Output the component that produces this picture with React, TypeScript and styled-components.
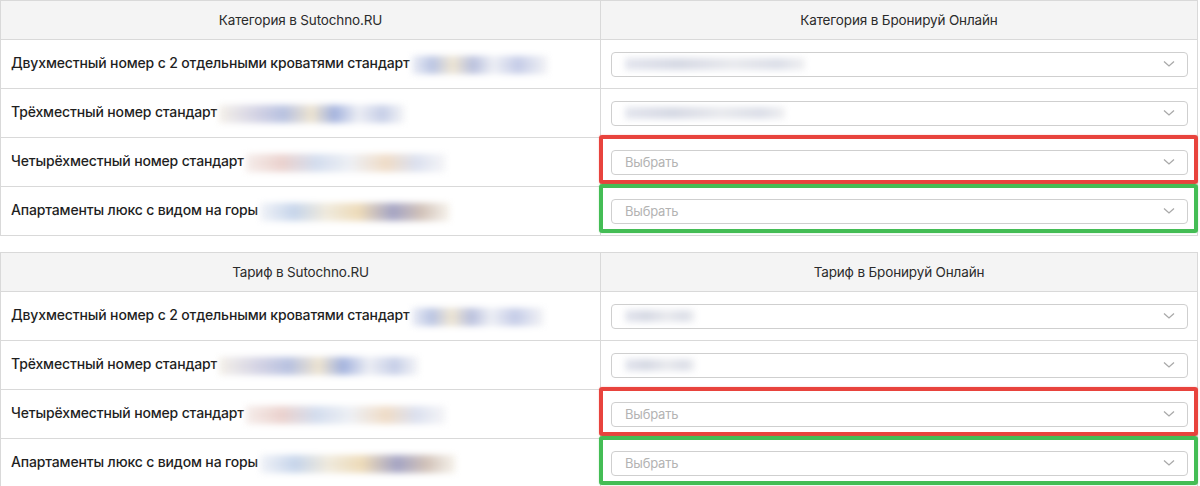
import React from "react";
import styled, { createGlobalStyle } from "styled-components";

const Global = createGlobalStyle`
  html, body { margin: 0; padding: 0; background: #fff; }
  body { font-family: Inter, "Noto Sans", sans-serif; color: #222; }
`;

const Page = styled.div`
  width: 1198px;
  display: flex;
  flex-direction: column;
  gap: 16px;
`;

const Table = styled.table`
  width: 1198px;
  border-collapse: collapse;
  table-layout: fixed;
`;

const HeadCell = styled.th`
  height: 38px;
  padding: 0;
  background: #f4f4f4;
  border: 1px solid #d9d9d9;
  font-weight: 400;
  font-size: 13.5px;
  color: #2b2b2b;
  text-align: center;
  vertical-align: middle;
  letter-spacing: -0.15px;
`;

const NameCell = styled.td`
  height: 48px;
  padding: 0 0 0 10px;
  border: 1px solid #d9d9d9;
  font-size: 14px;
  font-weight: 500;
  color: #1f1f1f;
  letter-spacing: -0.15px;
  white-space: nowrap;
`;

const SelectCell = styled.td`
  position: relative;
  height: 48px;
  padding: 0 9px 0 10px;
  border: 1px solid #d9d9d9;
`;

const Highlight = styled.div<{ $color: string }>`
  position: absolute;
  left: -2px;
  right: -1px;
  top: -3px;
  bottom: 2px;
  border: 4px solid ${(p) => p.$color};
  border-radius: 3px;
  pointer-events: none;
  box-shadow: 0 0 2px ${(p) => p.$color}55;
`;

const Blur = styled.span<{ $w: number; $bg: string }>`
  display: inline-block;
  vertical-align: middle;
  width: ${(p) => p.$w}px;
  height: 18px;
  margin-left: 2px;
  background: ${(p) => p.$bg};
  filter: blur(3px);
  opacity: 0.8;
`;

const Select = styled.div`
  height: 25px;
  box-sizing: border-box;
  border: 1px solid #cfcfcf;
  border-radius: 4px;
  background: #fff;
  display: flex;
  align-items: center;
  justify-content: space-between;
  padding: 0 12px 0 13px;
`;

const Placeholder = styled.span`
  font-size: 13px;
  color: #b3b3b3;
  letter-spacing: -0.2px;
`;

const ValueBlur = styled.span<{ $w: number }>`
  display: inline-block;
  width: ${(p) => p.$w}px;
  height: 12px;
  background: linear-gradient(90deg, #e4e6ee 0%, #d6d9e4 30%, #e9eaee 60%, #dcdfe8 85%, #f0f0f2 100%);
  filter: blur(3px);
`;

const Chevron = () => (
  <svg width="12" height="8" viewBox="0 0 12 8">
    <path d="M1 1.5 L6 6 L11 1.5" fill="none" stroke="#a9a9a9" strokeWidth="1.3" />
  </svg>
);

type Row = {
  name: string;
  blurW: number;
  blurBg: string;
  value?: number;
  mark?: string;
};

const g1 =
  "linear-gradient(90deg, #e6e9f3 0%, #aab7dd 15%, #eadfc8 30%, #a9b2d6 45%, #e9ebf2 60%, #b7c0e2 78%, #f2f2f4 100%)";
const g2 =
  "linear-gradient(90deg, #f2ede4 0%, #c9c8de 20%, #a7b3d9 35%, #e9ddc5 50%, #8ea1d6 62%, #e7e9f1 75%, #b9c3e2 88%, #f5f5f6 100%)";
const g3 =
  "linear-gradient(90deg, #f3e9e6 0%, #e6c7c2 18%, #c9d5ea 35%, #e9ecf2 52%, #ecd4ba 70%, #d3d9eb 85%, #f4f4f6 100%)";
const g4 =
  "linear-gradient(90deg, #eef0f6 0%, #b9cbe6 18%, #ece5d4 35%, #e9d2a8 52%, #8f8fb6 70%, #c7b4a8 85%, #f6f2ea 100%)";

const RED = "#e8433d";
const GREEN = "#44bd55";

const rows1: Row[] = [
  { name: "Двухместный номер с 2 отдельными кроватями стандарт", blurW: 136, blurBg: g1, value: 180 },
  { name: "Трёхместный номер стандарт", blurW: 186, blurBg: g2, value: 160 },
  { name: "Четырёхместный номер стандарт", blurW: 200, blurBg: g3, mark: RED },
  { name: "Апартаменты люкс с видом на горы", blurW: 190, blurBg: g4, mark: GREEN },
];

const rows2: Row[] = [
  { name: "Двухместный номер с 2 отдельными кроватями стандарт", blurW: 132, blurBg: g1, value: 70 },
  { name: "Трёхместный номер стандарт", blurW: 200, blurBg: g2, value: 70 },
  { name: "Четырёхместный номер стандарт", blurW: 200, blurBg: g3, mark: RED },
  { name: "Апартаменты люкс с видом на горы", blurW: 196, blurBg: g4, mark: GREEN },
];

const MapTable = ({ left, right, rows }: { left: string; right: string; rows: Row[] }) => (
  <Table>
    <colgroup>
      <col style={{ width: 600 }} />
      <col />
    </colgroup>
    <thead>
      <tr>
        <HeadCell>{left}</HeadCell>
        <HeadCell>{right}</HeadCell>
      </tr>
    </thead>
    <tbody>
      {rows.map((r, i) => (
        <tr key={i}>
          <NameCell>
            {r.name}
            <Blur $w={r.blurW} $bg={r.blurBg} />
          </NameCell>
          <SelectCell>
            <Select>
              {r.value ? <ValueBlur $w={r.value} /> : <Placeholder>Выбрать</Placeholder>}
              <Chevron />
            </Select>
            {r.mark && <Highlight $color={r.mark} />}
          </SelectCell>
        </tr>
      ))}
    </tbody>
  </Table>
);

export default function App() {
  return (
    <>
      <Global />
      <Page>
        <MapTable left="Категория в Sutochno.RU" right="Категория в Бронируй Онлайн" rows={rows1} />
        <MapTable left="Тариф в Sutochno.RU" right="Тариф в Бронируй Онлайн" rows={rows2} />
      </Page>
    </>
  );
}
